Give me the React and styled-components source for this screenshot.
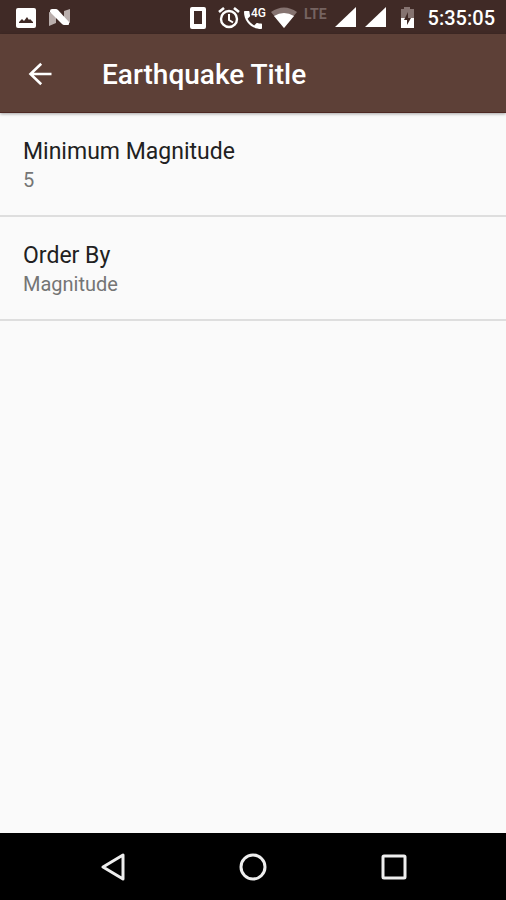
import React from "react";
import styled, { createGlobalStyle } from "styled-components";

const GlobalStyle = createGlobalStyle`
  * { box-sizing: border-box; }
  body { margin: 0; background: #fafafa; font-family: Roboto, "Noto Sans", sans-serif; }
  svg { display: block; flex: none; }
`;

const Screen = styled.div`
  display: flex;
  flex-direction: column;
  min-height: 100vh;
  background: #fafafa;
`;

const StatusBar = styled.div`
  display: flex;
  align-items: center;
  justify-content: space-between;
  height: 34px;
  padding: 1px 11px 0 16px;
  background: #402a26;
  color: #fff;
`;

const StatusGroup = styled.div`
  display: flex;
  align-items: center;
  gap: ${(p) => p.$gap};
`;

const NetworkLabel = styled.span`
  align-self: flex-start;
  margin: 0 4px 0 3px;
  font-size: 14px;
  line-height: 16px;
  font-weight: 700;
  color: #756360;
`;

const Clock = styled.time`
  margin-left: 10px;
  font-size: 20px;
  line-height: 24px;
  font-weight: 500;
`;

const AppBar = styled.header`
  display: flex;
  align-items: center;
  gap: 50px;
  height: 79px;
  padding: 2px 28px 0;
  background: #5d4037;
  border-bottom: 1px solid #4d2823;
  box-shadow: 0 1px 3px rgba(0, 0, 0, 0.35);
  color: #fff;
`;

const BackButton = styled.button`
  padding: 0;
  border: 0;
  background: none;
  color: inherit;
`;

const Title = styled.h1`
  margin: 0;
  padding-top: 2px;
  font-size: 28px;
  line-height: 32px;
  font-weight: 500;
`;

const Preferences = styled.main`
  flex: 1;
`;

const Preference = styled.button`
  display: block;
  width: 100%;
  padding: 24px 23px 21px;
  border: 0;
  border-bottom: 2px solid #dedede;
  background: none;
  font-family: inherit;
  text-align: left;
`;

const PreferenceTitle = styled.span`
  display: block;
  font-size: 23px;
  line-height: 30px;
  color: #212121;
`;

const PreferenceValue = styled.span`
  display: block;
  font-size: 20px;
  line-height: 27px;
  color: #757575;
`;

const NavBar = styled.nav`
  display: grid;
  grid-template-columns: repeat(3, 1fr);
  height: 67px;
  padding: 0 43px;
  background: #000;
`;

const NavButton = styled.button`
  display: flex;
  align-items: center;
  justify-content: center;
  padding: 0;
  border: 0;
  background: none;
  color: #eee;
`;

const PictureIcon = () => (
  <svg width="20" height="20" viewBox="0 0 20 20" aria-hidden="true">
    <rect width="20" height="20" rx="2" fill="#fff" />
    <path d="M3 15v-1l3-3 2 2 3-4 2 3 1-1 3 3v1z" fill="#402a26" />
  </svg>
);

const NougatIcon = () => (
  <svg width="22" height="20" viewBox="0 0 22 20" aria-hidden="true">
    <path d="M0 4l7 2v9l-7 3zM15 3l6-2v14l-6-2z" fill="#b9aeac" />
    <path d="M3 1h4q1 0 2 1l11 12v2q0 1-1 1h-4q-1 0-2-1L1 4V3q0-2 2-2z" fill="#fff" />
  </svg>
);

const PhoneIcon = () => (
  <svg width="24" height="22" viewBox="0 0 24 22" aria-hidden="true">
    <path fillRule="evenodd" d="M2 0h12q2 0 2 2v18q0 2-2 2H2q-2 0-2-2V2q0-2 2-2zM4 4v13h8V4z" fill="#fff" />
  </svg>
);

const AlarmIcon = () => (
  <svg width="22" height="22" viewBox="0 0 22 22" fill="none" stroke="#fff" aria-hidden="true">
    <circle cx="11" cy="12" r="8" strokeWidth="2.4" />
    <path d="M1 5l5-4M21 5l-5-4" strokeWidth="2.6" />
    <path d="M11 7v6l4 2.5" strokeWidth="2" />
  </svg>
);

const CallText = styled.text`
  font-size: 12px;
  font-weight: 500;
`;

const CallIcon = () => (
  <svg width="23" height="22" viewBox="0 0 23 22" fill="#fff" role="img" aria-label="4G call">
    <path transform="translate(-3 1)" d="M6.6 10.8c1.4 2.8 3.8 5.1 6.6 6.6l2.2-2.2c.3-.3.7-.4 1-.2 1.1.4 2.3.6 3.6.6.6 0 1 .4 1 1V20c0 .6-.4 1-1 1C10.6 21 3 13.4 3 4c0-.6.5-1 1-1h3.5c.6 0 1 .4 1 1 0 1.200.2 2.400.6 3.600.1.400 0 .700-.2 1z" />
    <CallText x="7" y="10">4G</CallText>
  </svg>
);

const WifiIcon = () => (
  <svg width="26" height="22" viewBox="0 0 26 22" aria-hidden="true">
    <path d="M0 5Q13-4 26 5L13 21z" fill="#857370" />
    <path d="M3 9Q13 3 23 9L13 21z" fill="#fff" />
  </svg>
);

const SignalIcon = () => (
  <svg width="21" height="21" viewBox="0 0 21 21" aria-hidden="true">
    <path d="M21 0v20H0z" fill="#fff" />
  </svg>
);

const BatteryIcon = () => (
  <svg width="24" height="22" viewBox="0 0 24 22" aria-hidden="true">
    <path d="M11 2h3V0h6v2h4v9H11z" fill="#857370" />
    <path d="M11 11h13v10H11z" fill="#fff" />
    <path d="M18 5v6h3l-4 7v-5h-3z" fill="#402a26" />
  </svg>
);

const BackArrow = () => (
  <svg width="24" height="24" viewBox="0 0 24 24" fill="none" stroke="currentColor" strokeWidth="2.6" aria-hidden="true">
    <path d="M23.5 12H3M13.2 1.7L2.500 12l10.700 10.300" />
  </svg>
);

const navShapes = {
  Back: <path d="M24 2v24L4 14z" />,
  Home: <circle cx="14" cy="14" r="12" />,
  Recents: <rect x="4" y="3" width="22" height="22" rx="1" />,
};

const preferences = [
  { title: "Minimum Magnitude", value: "5" },
  { title: "Order By", value: "Magnitude" },
];

export default function App() {
  return (
    <Screen>
      <GlobalStyle />
      <StatusBar>
        <StatusGroup $gap="13px">
          <PictureIcon />
          <NougatIcon />
        </StatusGroup>
        <StatusGroup $gap="4px">
          <PhoneIcon />
          <AlarmIcon />
          <CallIcon />
          <WifiIcon />
          <NetworkLabel>LTE</NetworkLabel>
          <StatusGroup $gap="9px">
            <SignalIcon />
            <SignalIcon />
          </StatusGroup>
          <BatteryIcon />
          <Clock>5:35:05</Clock>
        </StatusGroup>
      </StatusBar>
      <AppBar>
        <BackButton type="button" aria-label="Navigate up">
          <BackArrow />
        </BackButton>
        <Title>Earthquake Title</Title>
      </AppBar>
      <Preferences>
        {preferences.map((item) => (
          <Preference type="button" key={item.title}>
            <PreferenceTitle>{item.title}</PreferenceTitle>
            <PreferenceValue>{item.value}</PreferenceValue>
          </Preference>
        ))}
      </Preferences>
      <NavBar>
        {Object.entries(navShapes).map(([label, shape]) => (
          <NavButton type="button" aria-label={label} key={label}>
            <svg width="28" height="28" viewBox="0 0 28 28" fill="none" stroke="currentColor" strokeWidth="3" strokeLinejoin="round">
              {shape}
            </svg>
          </NavButton>
        ))}
      </NavBar>
    </Screen>
  );
}
